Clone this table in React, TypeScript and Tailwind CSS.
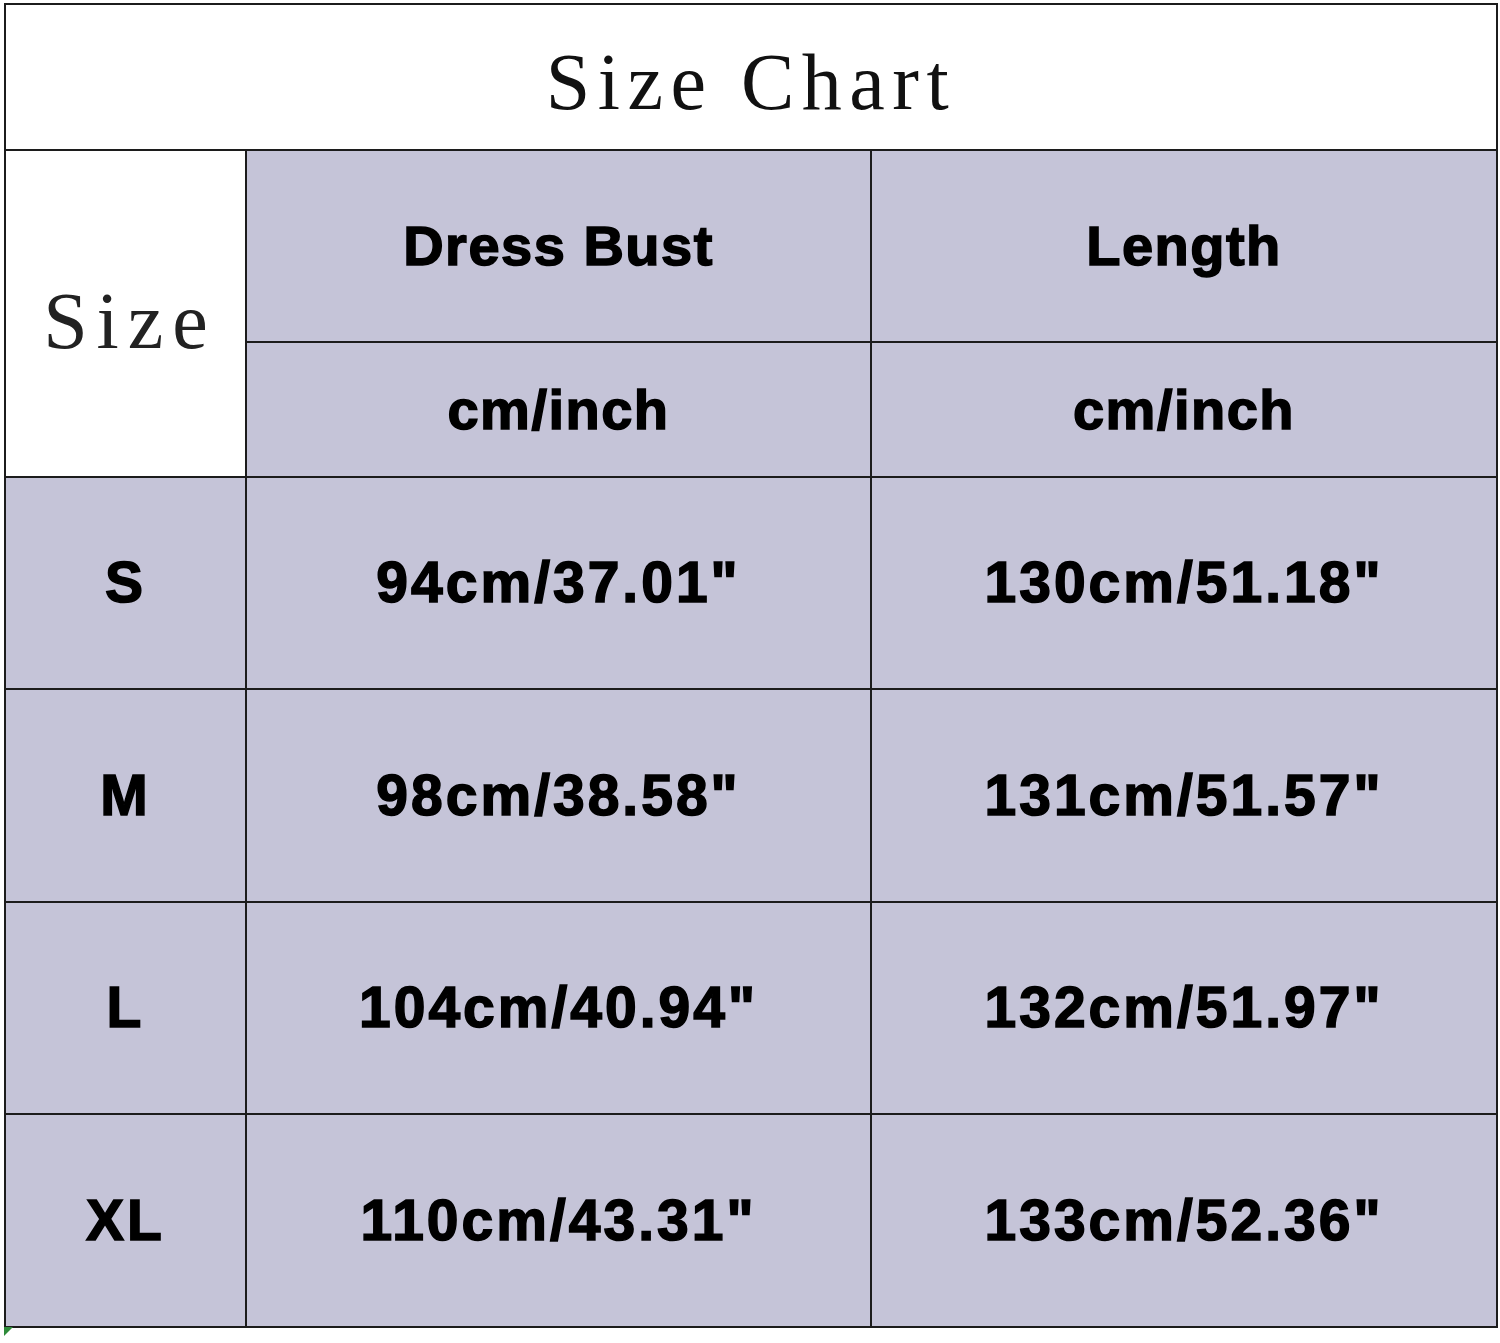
import * as React from 'react'

const rows = [
  { size: 'S', bust: '94cm/37.01"', length: '130cm/51.18"' },
  { size: 'M', bust: '98cm/38.58"', length: '131cm/51.57"' },
  { size: 'L', bust: '104cm/40.94"', length: '132cm/51.97"' },
  { size: 'XL', bust: '110cm/43.31"', length: '133cm/52.36"' },
]

const headText =
  "font-['Liberation_Sans',Arial,sans-serif] font-bold text-[56px] tracking-[1.5px] text-black [-webkit-text-stroke:1.5px_black]"
const dataText =
  "font-['Liberation_Sans',Arial,sans-serif] font-bold text-[57px] tracking-[3px] text-black [-webkit-text-stroke:1.5px_black]"

function Cell({ children, data = false }: { children?: React.ReactNode; data?: boolean }) {
  return (
    <div className="flex items-center justify-center bg-[#c5c4d8]">
      <span className={data ? dataText : headText}>{children}</span>
    </div>
  )
}

export default function App() {
  return (
    <div className="relative h-[1343px] w-[1500px] bg-white pl-[4px] pt-[3px]">
      <div className="grid w-[1494px] grid-cols-[239px_623px_624px] grid-rows-[144px_190px_133px_210px_211px_210px_211px] gap-[2px] bg-[#1c1c1c] p-[2px]">
        <div className="col-span-3 flex items-center justify-center bg-white">
          <span className="pt-[10px] font-['Liberation_Serif','Times_New_Roman',serif] text-[80px] leading-none tracking-[7.5px] text-[#111]">
            Size Chart
          </span>
        </div>
        <div className="row-span-2 flex items-center justify-center bg-white">
          <span className="pl-[9px] pt-[14px] font-['Liberation_Serif','Times_New_Roman',serif] text-[80px] leading-none tracking-[9px] text-[#222]">
            Size
          </span>
        </div>
        <Cell>Dress Bust</Cell>
        <Cell>Length</Cell>
        <Cell>cm/inch</Cell>
        <Cell>cm/inch</Cell>
        {rows.map((r) => (
          <React.Fragment key={r.size}>
            <Cell data>{r.size}</Cell>
            <Cell data>{r.bust}</Cell>
            <Cell data>{r.length}</Cell>
          </React.Fragment>
        ))}
      </div>
      <svg className="absolute left-[4px] top-[1327px]" width="9" height="9" viewBox="0 0 9 9">
        <polygon points="0,0 9,0 0,9" fill="#2e8b3a" />
      </svg>
    </div>
  )
}
